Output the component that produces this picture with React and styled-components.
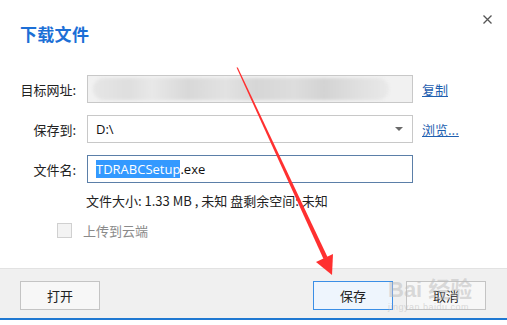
import styled, { createGlobalStyle } from "styled-components";

const GlobalStyle = createGlobalStyle`
  html, body { margin: 0; padding: 0; background: #fff; }
  body { font-family: "Noto Sans CJK SC", "Liberation Sans", sans-serif; }
`;

const Dialog = styled.div`
  position: relative;
  width: 507px;
  height: 325px;
  background: #fff;
  display: flex;
  flex-direction: column;
  overflow: hidden;
`;

const Header = styled.div`
  display: flex;
  justify-content: space-between;
  align-items: flex-start;
  padding: 12px 13px 0 20px;
  height: 63px;
  box-sizing: border-box;
`;

const Title = styled.h1`
  margin: 12px 0 0 0;
  font-size: 17px;
  line-height: 20px;
  font-weight: 700;
  color: #1c6fd6;
  letter-spacing: 0.3px;
`;

const Close = styled.button`
  border: none;
  background: none;
  padding: 0;
  width: 14px;
  height: 14px;
  display: flex;
  align-items: center;
  justify-content: center;
`;

const Form = styled.div`
  display: flex;
  flex-direction: column;
  gap: 12px;
  padding: 12px 0 0 20px;
`;

const Row = styled.div`
  display: flex;
  align-items: center;
  gap: 11px;
  height: 28px;
`;

const Label = styled.label`
  width: 56px;
  text-align: right;
  font-size: 13px;
  color: #222;
  white-space: nowrap;
`;

const Field = styled.div`
  width: 326px;
  height: 28px;
  box-sizing: border-box;
  border: 1px solid ${(p) => (p.$focus ? "#5b7fa8" : "#c8c8c8")};
  background: ${(p) => (p.$disabled ? "#f1f1f1" : "#fff")};
  display: flex;
  align-items: center;
  padding: 0 8px;
  font-family: "Open Sans", "Liberation Sans", sans-serif;
  font-size: 13px;
  color: #111;
`;

const Blur = styled.div`
  width: 296px;
  height: 22px;
  margin-left: -3px;
  border-radius: 11px;
  background: linear-gradient(
    90deg,
    #e6e6e6 0%,
    #dedede 12%,
    #e8e8e8 20%,
    #d8d8d8 32%,
    #e2e2e2 45%,
    #d6d6d6 55%,
    #dddddd 68%,
    #d3d3d3 78%,
    #e0e0e0 90%,
    #e9e9e9 100%
  );
  filter: blur(1.5px);
`;

const Value = styled.span`
  flex: 1;
`;

const Selected = styled.span`
  background: #3399ff;
  color: #fff;
`;

const Caret = styled.span`
  width: 0;
  height: 0;
  border-left: 4px solid transparent;
  border-right: 4px solid transparent;
  border-top: 4px solid #6a6a6a;
  margin-right: 1px;
`;

const LinkText = styled.a`
  font-size: 13px;
  color: #1f5fb0;
  text-decoration: underline;
  margin-left: -2px;
  white-space: nowrap;
`;

const Info = styled.div`
  font-size: 13px;
  color: #222;
  padding-left: 86px;
  margin-top: 6px;
  height: 24px;
  line-height: 24px;
`;

const Check = styled.div`
  display: flex;
  align-items: center;
  gap: 11px;
  padding-left: 57px;
  margin-top: 8px;
  font-size: 13px;
  color: #8a8a8a;
`;

const Box = styled.span`
  width: 13px;
  height: 13px;
  border: 1px solid #d0d0d0;
  background: #f3f3f3;
`;

const Footer = styled.div`
  margin-top: auto;
  height: 52px;
  box-sizing: border-box;
  background: #f0f0f0;
  border-top: 1px solid #e2e2e2;
  border-bottom: 2px solid #1f78d1;
  display: flex;
  align-items: flex-start;
  padding: 12px 21px 0 20px;
  gap: 13px;
  margin-bottom: 5px;
`;

const Button = styled.button`
  width: 80px;
  height: 29px;
  box-sizing: border-box;
  border: 1px solid ${(p) => (p.$primary ? "#3a8ee6" : "#c4c4c4")};
  background: ${(p) => (p.$primary ? "#eef5fd" : "#f7f7f7")};
  font-family: "Noto Sans CJK SC", sans-serif;
  font-size: 13px;
  color: #222;
  margin-left: ${(p) => (p.$push ? "auto" : "0")};
`;

const Watermark = styled.div`
  position: absolute;
  left: 388px;
  top: 279px;
  color: rgba(190, 190, 190, 0.55);
  font-family: "Liberation Sans", "Noto Sans CJK SC", sans-serif;
  pointer-events: none;
  line-height: 1;
  span {
    display: block;
    white-space: nowrap;
  }
  .big {
    font-size: 22px;
    font-weight: 700;
  }
  .small {
    font-size: 9px;
    margin-top: 2px;
    letter-spacing: 0.5px;
  }
`;

const Arrow = styled.svg`
  position: absolute;
  left: 0;
  top: 0;
  pointer-events: none;
`;

export default function App() {
  return (
    <>
      <GlobalStyle />
      <Dialog>
        <Header>
          <Title>下载文件</Title>
          <Close>
            <svg width="9" height="9" viewBox="0 0 9 9">
              <path d="M0.5 0.5 L8.5 8.5 M8.5 0.5 L0.5 8.5" stroke="#555" strokeWidth="1.3" />
            </svg>
          </Close>
        </Header>
        <Form>
          <Row>
            <Label>目标网址:</Label>
            <Field $disabled>
              <Blur />
            </Field>
            <LinkText>复制</LinkText>
          </Row>
          <Row>
            <Label>保存到:</Label>
            <Field>
              <Value>D:\</Value>
              <Caret />
            </Field>
            <LinkText>浏览...</LinkText>
          </Row>
          <Row>
            <Label>文件名:</Label>
            <Field $focus>
              <Value>
                <Selected>TDRABCSetup</Selected>.exe
              </Value>
            </Field>
          </Row>
        </Form>
        <Info>文件大小: 1.33 MB , 未知 盘剩余空间: 未知</Info>
        <Check>
          <Box />
          上传到云端
        </Check>
        <Footer>
          <Button>打开</Button>
          <Button $primary $push>保存</Button>
          <Button>取消</Button>
        </Footer>
        <Watermark>
          <span className="big">Bai 经验</span>
          <span className="small">jingyan.baidu.com</span>
        </Watermark>
        <Arrow width="507" height="325" viewBox="0 0 507 325">
          <polygon points="236.5,67.5 237.8,67.5 327.5,257 323.5,259" fill="#ff3030" />
          <polygon points="316,262 333,254 332,275" fill="#ff3030" />
        </Arrow>
      </Dialog>
    </>
  );
}
